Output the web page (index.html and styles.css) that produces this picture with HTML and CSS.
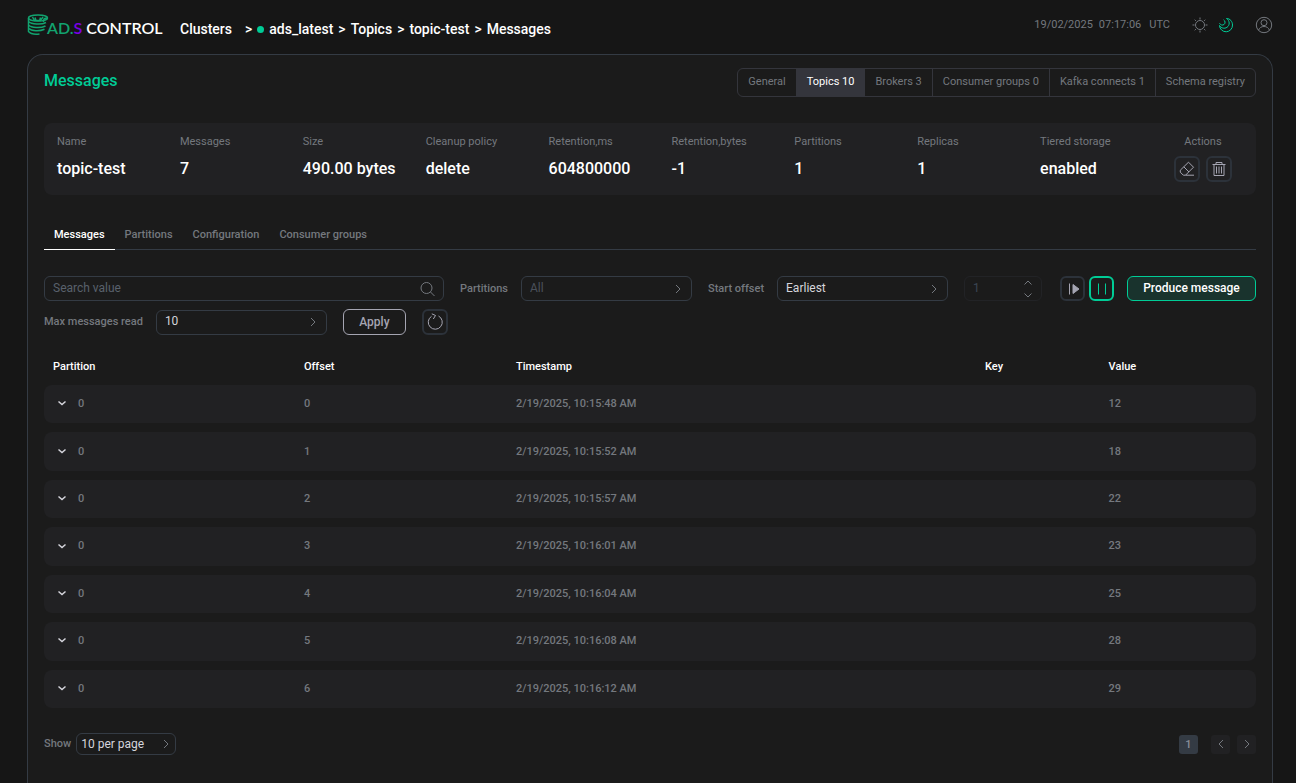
FILE: index.html
```
<!DOCTYPE html>
<html lang="en">

<head>
    <meta charset="UTF-8">
    <meta name="viewport" content="width=device-width, initial-scale=1.0">
    <title>Messages - ADS Control</title>
    <link rel="stylesheet" href="styles.css">
</head>

<body>
    <!-- shared icons -->
    <svg class="sprite" aria-hidden="true">
        <symbol id="right" viewBox="0 0 10 10"><path d="M3 1l4 4-4 4" /></symbol>
        <symbol id="down" viewBox="0 0 10 10"><path d="M1.500 3.500L5 6.500l3.500-3" /></symbol>
    </svg>

    <header>
        <a class="logo" href="#">
            <svg width="22" height="22" viewBox="0 0 22 22">
                <ellipse cx="11" cy="4" rx="9.500" ry="3" />
                <path d="M1.500 4v13.500c2 2.500 7 3 11 2.500M1.500 7.500c3 3 13 3.500 17.500 1M1.500 11c3 3 12 3.500 17 1M1.500 14.300c3 3 11 3.300 16 1M20.500 4c-3.500 0-4 1-4 4M5.500 3l2 3.500h6L16 3M8 3.500l.8 2.500M13.500 3.500L12.800 6" />
            </svg>
            <span class="logo-text"><span class="green">AD.</span><span class="purple">S</span> CONTROL</span>
        </a>
        <nav class="breadcrumbs">
            <a class="first" href="#">Clusters</a>
            <span>&gt;</span>
            <i class="dot"></i>
            <a href="#">ads_latest</a>
            <span>&gt;</span>
            <a href="#">Topics</a>
            <span>&gt;</span>
            <a href="#">topic-test</a>
            <span>&gt;</span>
            <a href="#">Messages</a>
        </nav>
        <div class="clock"><span>19/02/2025</span><span>07:17:06</span><span class="zone">UTC</span></div>
        <div class="theme">
            <button aria-label="Light theme">
                <svg width="16" height="16" viewBox="0 0 16 16">
                    <circle cx="8" cy="8" r="4.500" />
                    <path d="M8 .5v2M8 13.500v2M.5 8h2M13.500 8h2M2.700 2.700l1.200 1.200M12.100 12.100l1.200 1.200M2.700 13.300l1.200-1.200M12.100 3.900l1.200-1.200" />
                </svg>
            </button>
            <button class="active" aria-label="Dark theme">
                <svg width="16" height="16" viewBox="0 0 16 16">
                    <path d="M8.500 1.500C12.200 1.500 14.500 4.700 14.500 8a6.500 6.500 0 0 1-13 .5c1.500 2.700 5 3.500 7.500 1.800 3-2 3-6.500-.5-8.800zM1.500 6.200c1 2 3.200 2.400 4.600 1.200 1.500-1.300 1.200-3.500-.6-4.600" />
                </svg>
            </button>
        </div>
        <button class="user" aria-label="Account">
            <svg width="18" height="18" viewBox="0 0 18 18">
                <circle cx="9" cy="9" r="7.700" />
                <circle cx="9" cy="6.700" r="3" />
                <path d="M3.500 14.300c.8-2.600 3-3.800 5.500-3.800s4.700 1.200 5.500 3.800" />
            </svg>
        </button>
    </header>

    <main>
        <div class="title-row">
            <h1>Messages</h1>
            <nav class="cluster-tabs">
                <a href="#">General</a>
                <a class="active" href="#">Topics 10</a>
                <a href="#">Brokers 3</a>
                <a href="#">Consumer groups 0</a>
                <a href="#">Kafka connects 1</a>
                <a href="#">Schema registry</a>
            </nav>
        </div>

        <dl class="summary">
            <div><dt>Name</dt><dd>topic-test</dd></div>
            <div><dt>Messages</dt><dd>7</dd></div>
            <div><dt>Size</dt><dd>490.00 bytes</dd></div>
            <div><dt>Cleanup policy</dt><dd>delete</dd></div>
            <div><dt>Retention,ms</dt><dd>604800000</dd></div>
            <div><dt>Retention,bytes</dt><dd>-1</dd></div>
            <div><dt>Partitions</dt><dd>1</dd></div>
            <div><dt>Replicas</dt><dd>1</dd></div>
            <div><dt>Tiered storage</dt><dd>enabled</dd></div>
            <div class="actions">
                <dt>Actions</dt>
                <dd>
                    <button class="icon-btn" aria-label="Clear topic">
                        <svg width="16" height="16" viewBox="0 0 16 16">
                            <path d="M1.300 9.200L9.500 1.200l5 5-8 8H4.300l-3-3zM4.800 5.800l5.200 5.200M6.500 14.200h8.500" />
                        </svg>
                    </button>
                    <button class="icon-btn" aria-label="Delete topic">
                        <svg width="16" height="16" viewBox="0 0 16 16">
                            <path d="M1.500 3.500h13M5 3.500v-2h6v2M3 3.500v11h10v-11M5.500 5.500v7M8 5.500v7M10.500 5.500v7" />
                        </svg>
                    </button>
                </dd>
            </div>
        </dl>

        <nav class="topic-tabs">
            <a class="active" href="#">Messages</a>
            <a href="#">Partitions</a>
            <a href="#">Configuration</a>
            <a href="#">Consumer groups</a>
        </nav>

        <form class="filters">
            <div class="field search">
                <input type="text" placeholder="Search value" aria-label="Search value">
                <svg width="15" height="15" viewBox="0 0 15 15"><circle cx="6.500" cy="6.500" r="5.500" /><path d="M10.500 10.500l4 4" /></svg>
            </div>
            <div class="group">
                <label for="partitions">Partitions</label>
                <div class="field">
                    <select id="partitions" class="empty"><option>All</option></select>
                    <svg width="10" height="10"><use href="#right" /></svg>
                </div>
            </div>
            <div class="group">
                <label for="offset">Start offset</label>
                <div class="field">
                    <select id="offset"><option>Earliest</option></select>
                    <svg width="10" height="10"><use href="#right" /></svg>
                </div>
            </div>
            <div class="field number">
                <input type="number" value="1" aria-label="Offset value" disabled>
                <svg width="10" height="18" viewBox="0 0 10 18"><path d="M1.500 4.500L5 1l3.500 3.500M1.500 13.500L5 17l3.500-3.500" /></svg>
            </div>
            <div class="group run">
                <button type="button" class="icon-btn" aria-label="Play">
                    <svg width="16" height="16" viewBox="0 0 16 16"><path d="M4.500 2.500v11" /><path class="solid" d="M8 3.500l6 4.500-6 4.500z" /></svg>
                </button>
                <button type="button" class="icon-btn on" aria-label="Pause">
                    <svg width="16" height="16" viewBox="0 0 16 16"><path d="M4.500 2.500v11M11.500 2.500v11" /></svg>
                </button>
                <button type="button" class="produce">Produce message</button>
            </div>
            <div class="group">
                <label for="max">Max messages read</label>
                <div class="field">
                    <select id="max"><option>10</option></select>
                    <svg width="10" height="10"><use href="#right" /></svg>
                </div>
            </div>
            <button type="button" class="apply">Apply</button>
            <button type="button" class="icon-btn" aria-label="Refresh">
                <svg width="18" height="18" viewBox="0 0 18 18"><path d="M5.500 3.300A7 7 0 1 0 12.500 3M5.800 0.800l3.700 1.700L7.300 6" /></svg>
            </button>
        </form>

        <table>
            <colgroup>
                <col class="c-partition">
                <col class="c-offset">
                <col class="c-time">
                <col class="c-key">
                <col>
            </colgroup>
            <thead>
                <tr><th>Partition</th><th>Offset</th><th>Timestamp</th><th>Key</th><th>Value</th></tr>
            </thead>
            <tbody>
                <tr><td><button aria-label="Expand"><svg width="10" height="10"><use href="#down" /></svg></button>0</td><td>0</td><td>2/19/2025, 10:15:48 AM</td><td></td><td>12</td></tr>
                <tr><td><button aria-label="Expand"><svg width="10" height="10"><use href="#down" /></svg></button>0</td><td>1</td><td>2/19/2025, 10:15:52 AM</td><td></td><td>18</td></tr>
                <tr><td><button aria-label="Expand"><svg width="10" height="10"><use href="#down" /></svg></button>0</td><td>2</td><td>2/19/2025, 10:15:57 AM</td><td></td><td>22</td></tr>
                <tr><td><button aria-label="Expand"><svg width="10" height="10"><use href="#down" /></svg></button>0</td><td>3</td><td>2/19/2025, 10:16:01 AM</td><td></td><td>23</td></tr>
                <tr><td><button aria-label="Expand"><svg width="10" height="10"><use href="#down" /></svg></button>0</td><td>4</td><td>2/19/2025, 10:16:04 AM</td><td></td><td>25</td></tr>
                <tr><td><button aria-label="Expand"><svg width="10" height="10"><use href="#down" /></svg></button>0</td><td>5</td><td>2/19/2025, 10:16:08 AM</td><td></td><td>28</td></tr>
                <tr><td><button aria-label="Expand"><svg width="10" height="10"><use href="#down" /></svg></button>0</td><td>6</td><td>2/19/2025, 10:16:12 AM</td><td></td><td>29</td></tr>
            </tbody>
        </table>

        <div class="pager">
            <label for="per-page">Show</label>
            <div class="field">
                <select id="per-page"><option>10 per page</option></select>
                <svg width="10" height="10"><use href="#right" /></svg>
            </div>
            <div class="pages">
                <button class="current">1</button>
                <button class="prev" aria-label="Previous"><svg width="10" height="10"><use href="#right" /></svg></button>
                <button aria-label="Next"><svg width="10" height="10"><use href="#right" /></svg></button>
            </div>
        </div>
    </main>
</body>

</html>
```
FILE: styles.css
```
:root {
    --Green: #00cc96;
    --Border: #343b44;
    --Muted: #74787e;
    --Light: #a5a5b2;
    --Card: #212123;
}

* {
    box-sizing: border-box;
}

body {
    font-family: Roboto, sans-serif;
    font-size: 11px;
    line-height: 16px;
    margin: 0;
    padding: 0 23px 0 27px;
    background-color: #161616;
    color: var(--Muted);
}

a {
    color: inherit;
    text-decoration: none;
}

button,
input,
select {
    font-family: inherit;
    font-size: 12px;
    margin: 0;
}

button {
    background: none;
    border: none;
    padding: 0;
    color: inherit;
    cursor: pointer;
}

svg {
    display: block;
    fill: none;
    stroke: currentColor;
}

.sprite {
    display: none;
}

/* header */
header {
    display: flex;
    align-items: center;
    height: 54px;
    padding-bottom: 4px;
}

.logo {
    display: flex;
    align-items: center;
    width: 153px;
    color: #fff;
}

.logo svg {
    color: #12a36f;
    stroke-width: 1.5;
}

.logo-text {
    margin-left: -2px;
    font-family: Lato, sans-serif;
    font-size: 16px;
    font-weight: 600;
    padding-top: 6px;
    white-space: nowrap;
}

.green {
    color: #12a36f;
}

.purple {
    color: #7a00e6;
}

.breadcrumbs {
    display: flex;
    align-items: center;
    gap: 5px;
    padding-top: 8px;
    font-size: 14px;
    font-weight: 500;
    color: #fff;
}

.breadcrumbs .first {
    margin-right: 8px;
}

.dot {
    width: 7px;
    height: 7px;
    border-radius: 50%;
    background-color: var(--Green);
}

.clock {
    display: flex;
    gap: 6px;
    margin-left: auto;
}

.zone {
    margin-left: 2px;
}

.theme {
    display: flex;
    gap: 10px;
    margin: 0 30px 0 22px;
}

.theme {
    margin-right: 21px;
}

.theme .active {
    color: var(--Green);
}

/* main panel */
main {
    min-height: calc(100vh - 54px);
    padding: 13px 16px 24px;
    background-color: #1b1b1b;
    border: 1px solid var(--Border);
    border-bottom: none;
    border-radius: 16px 16px 0 0;
}

.title-row {
    display: flex;
    justify-content: space-between;
    align-items: flex-start;
}

h1 {
    margin: 0;
    font-size: 16px;
    line-height: 26px;
    font-weight: 500;
    color: var(--Green);
}

.cluster-tabs {
    display: flex;
    border: 1px solid #34353c;
    border-radius: 6px;
    overflow: hidden;
}

.cluster-tabs a {
    padding: 5px 10px 6px;
    border-right: 1px solid #34353c;
}

.cluster-tabs a:last-child {
    border-right: none;
}

.cluster-tabs .active {
    background-color: #34353c;
    color: #fff;
}

.summary {
    display: grid;
    grid-template-columns: repeat(9, 1fr) 80px;
    height: 72px;
    margin: 26px 0 31px;
    padding: 11px 13px;
    background-color: var(--Card);
    border-radius: 8px;
}

.summary dd {
    margin: 6px 0 0;
    font-size: 16px;
    line-height: 26px;
    font-weight: 500;
    color: #fff;
    white-space: nowrap;
}

.summary .actions {
    text-align: center;
}

.actions dd {
    display: flex;
    justify-content: center;
    gap: 6px;
}

.icon-btn {
    display: flex;
    align-items: center;
    justify-content: center;
    width: 26px;
    height: 26px;
    border: 2px solid #2c323a;
    border-radius: 6px;
    color: var(--Light);
}

.icon-btn.on {
    border-color: var(--Green);
    color: var(--Green);
}

.solid {
    fill: currentColor;
}

.topic-tabs {
    display: flex;
    border-bottom: 1px solid var(--Border);
    font-weight: 500;
}

.topic-tabs a {
    padding: 1px 10px 6px;
    margin-bottom: -1px;
    border-bottom: 1px solid transparent;
}

.topic-tabs .active {
    color: #fff;
    border-color: #fff;
}

/* filters */
.filters {
    display: flex;
    flex-wrap: wrap;
    align-items: center;
    gap: 8px 16px;
    margin-top: 26px;
}

.group {
    display: flex;
    align-items: center;
    gap: 13px;
    font-weight: 500;
}

.run {
    gap: 4px;
    margin-left: auto;
}

.run .icon-btn {
    width: 25px;
    height: 25px;
}

.field {
    position: relative;
    width: 171px;
}

.field input,
.field select {
    display: block;
    width: 100%;
    height: 25px;
    padding: 0 8px 2px;
    background: none;
    border: 1px solid var(--Border);
    border-radius: 6px;
    color: #d5d5dc;
    appearance: none;
    outline: none;
}

.field svg {
    position: absolute;
    right: 9px;
    top: 50%;
    transform: translateY(-50%);
    pointer-events: none;
}

.field .empty {
    color: #4b515b;
}

.field input::placeholder {
    color: #59616c;
}

.search {
    width: 400px;
}

.number {
    width: 78px;
}

.number input {
    border-color: #222326;
    color: #3b4654;
    appearance: textfield;
}

.produce {
    height: 25px;
    width: 129px;
    margin-left: 9px;
    padding-bottom: 2px;
    background-color: #19332d;
    border: 1px solid var(--Green);
    border-radius: 6px;
    font-weight: 500;
    color: #fff;
}

.apply {
    width: 63px;
    height: 26px;
    border: 1px solid var(--Light);
    border-radius: 6px;
    font-weight: 500;
    color: var(--Light);
}

/* messages */
table {
    width: 100%;
    height: 377px;
    margin-top: 5px;
    table-layout: fixed;
    border-collapse: separate;
    border-spacing: 0 9px;
    font-weight: 500;
}

.c-partition {
    width: 20.7%;
}

.c-offset {
    width: 17.5%;
}

.c-time {
    width: 38.7%;
}

.c-key {
    width: 10.2%;
}

th,
td {
    padding: 0 9px;
    text-align: left;
}

th {
    height: 27px;
    padding-top: 9px;
    font-weight: 500;
    color: #fff;
}

td {
    background-color: var(--Card);
}

td:first-child {
    border-radius: 8px 0 0 8px;
}

td:last-child {
    border-radius: 0 8px 8px 0;
}

td button {
    margin: 0 11px 2px 4px;
    color: #d5d5dc;
    vertical-align: middle;
}

td svg {
    stroke-width: 1.5;
}

.pager {
    display: flex;
    align-items: center;
    gap: 5px;
    margin-top: 16px;
    font-weight: 500;
}

.pager .field {
    width: 100px;
}

.pager select {
    height: 22px;
    padding: 0 4px;
}

.pager .field svg {
    right: 5px;
}

.pages {
    display: flex;
    gap: 7px;
    margin-left: auto;
}

.pages button {
    display: flex;
    align-items: center;
    justify-content: center;
    width: 19px;
    height: 19px;
    background-color: #212123;
    border-radius: 3px;
    font-size: 11px;
    font-weight: 500;
}

.pages .current {
    margin-right: 6px;
    background-color: #343b44;
    color: #8a9099;
}

.prev svg {
    transform: scaleX(-1);
}
```
